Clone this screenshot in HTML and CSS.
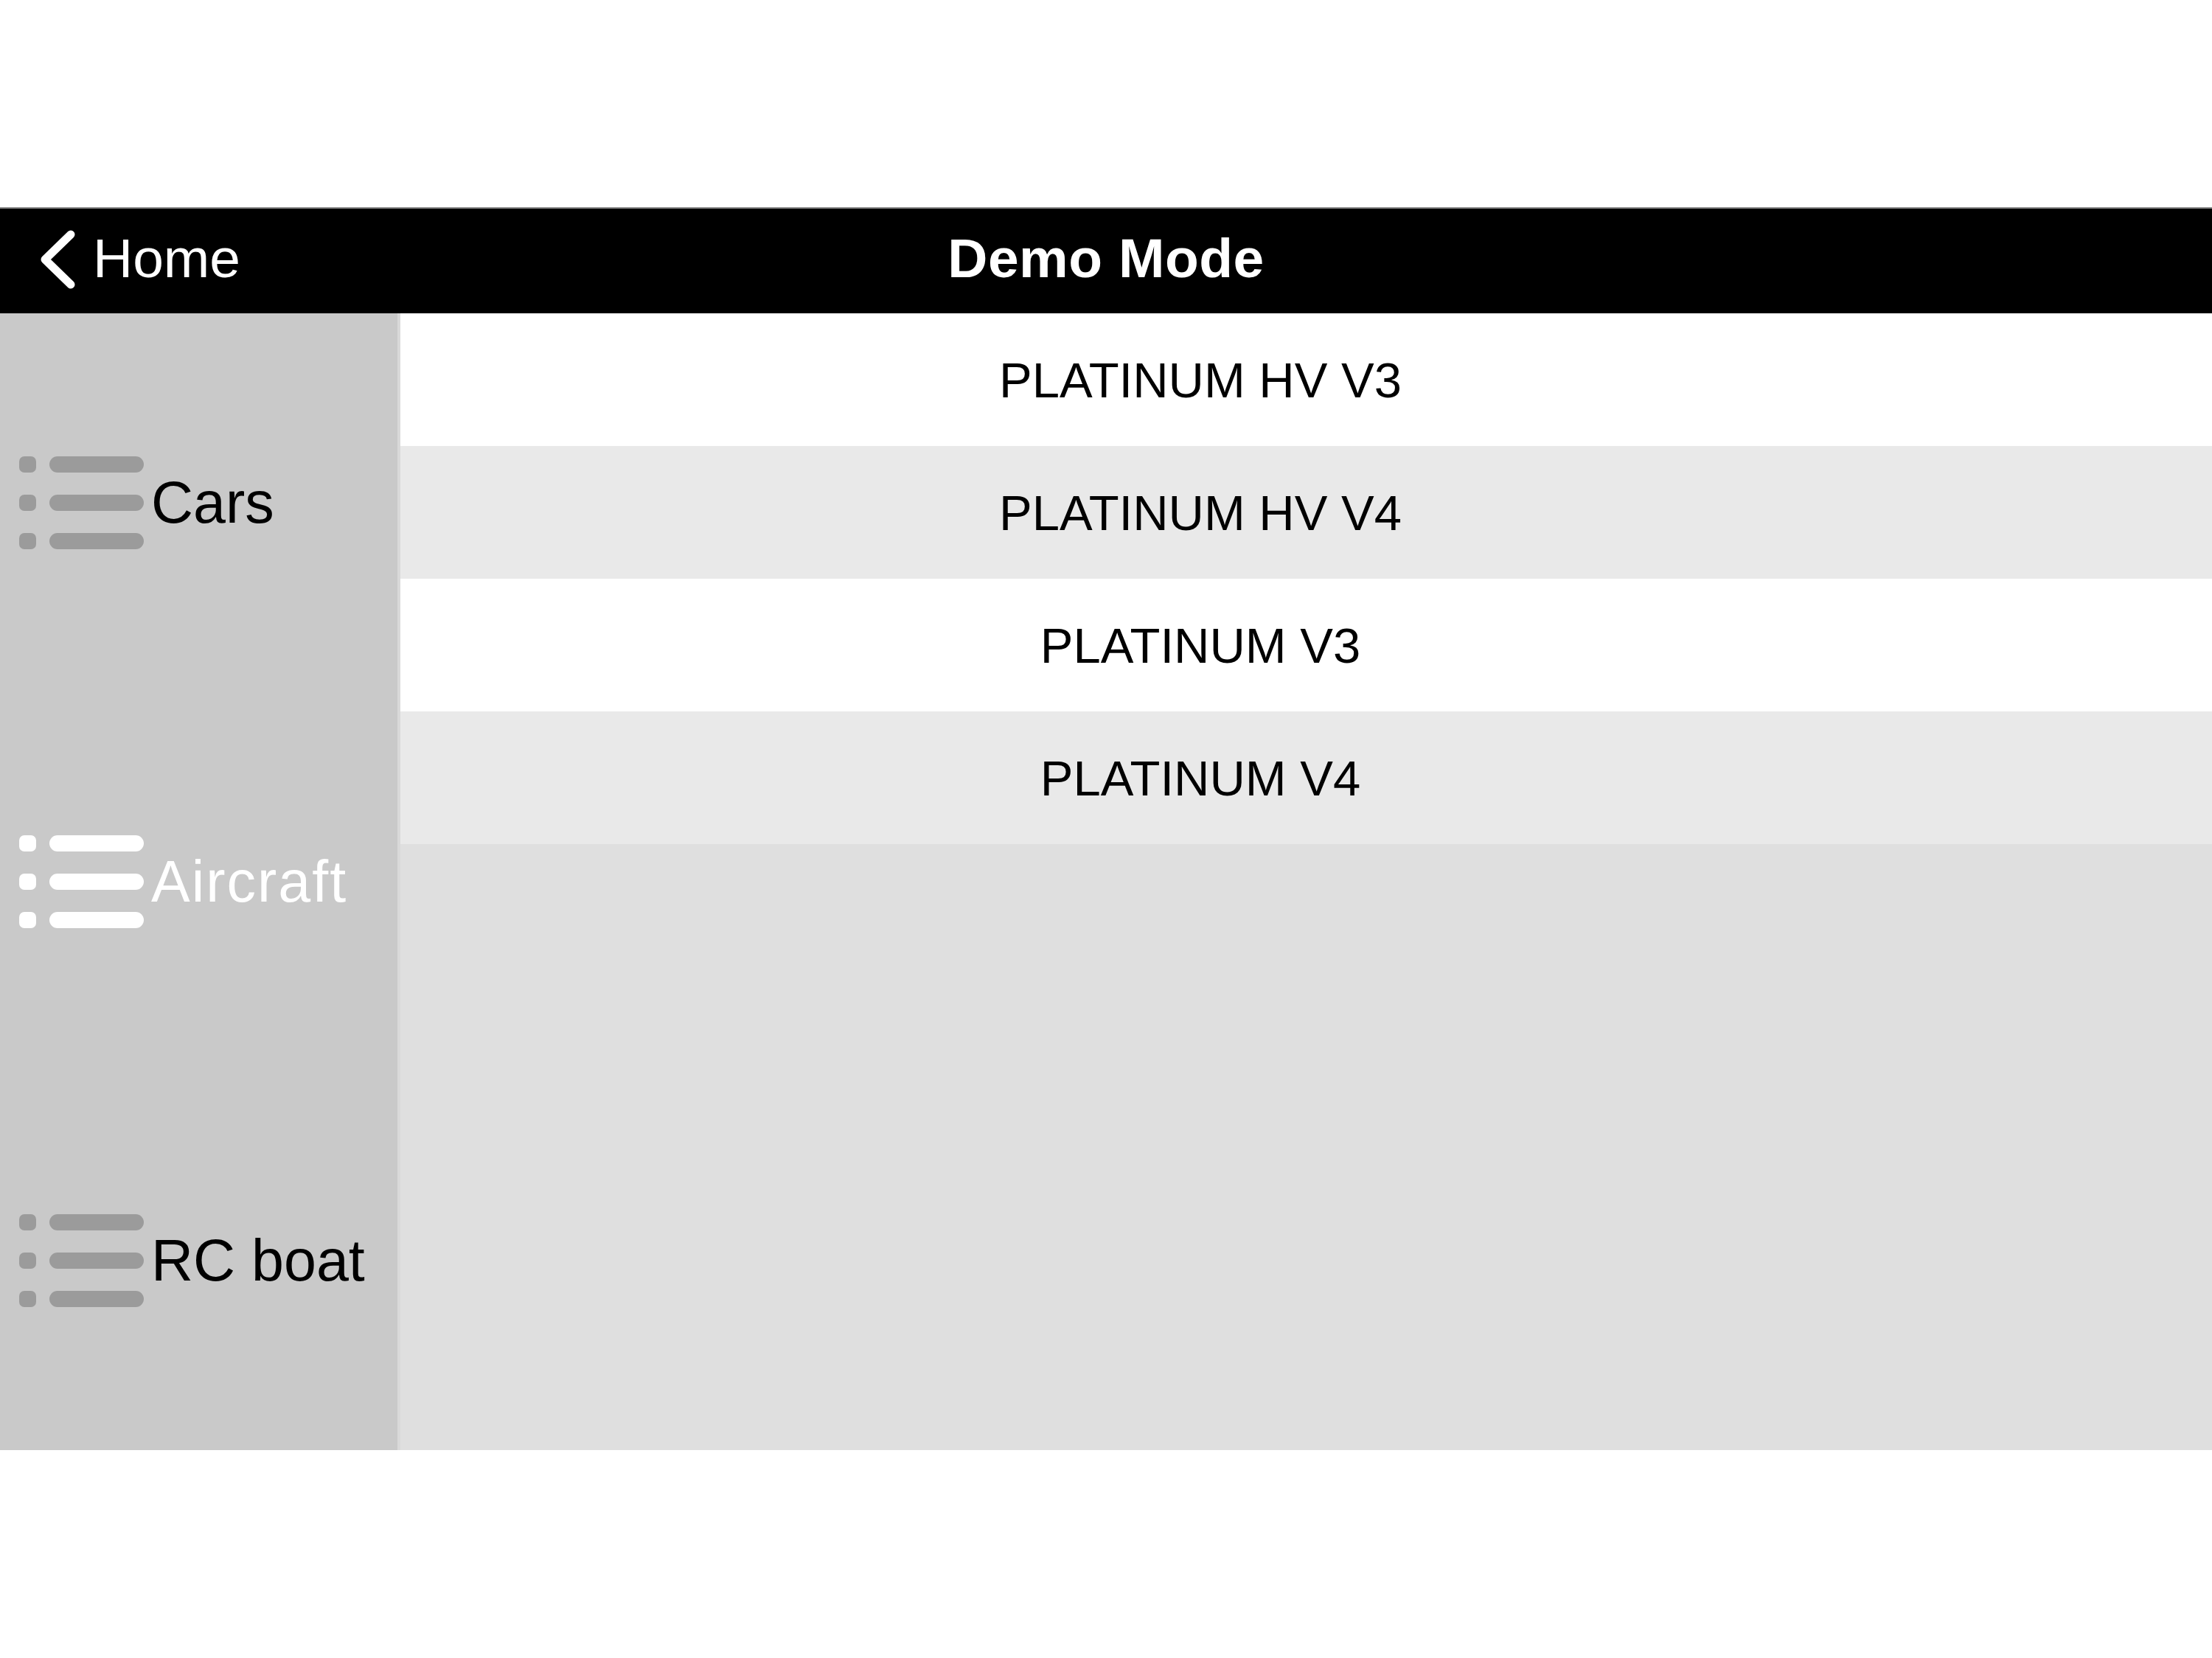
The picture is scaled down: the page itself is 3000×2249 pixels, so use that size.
FILE: index.html
```html
<!DOCTYPE html>
<html>
<head>
<meta charset="utf-8">
<link rel="stylesheet" href="styles.css">
</head>
<body>
<div class="top-space"></div>
<header class="navbar">
  <div class="back">
    <svg class="chevron" viewBox="0 0 52 84" width="52" height="84">
      <path d="M44 8 L9 42 L44 76" fill="none" stroke="#fff" stroke-width="11" stroke-linecap="round" stroke-linejoin="round"/>
    </svg>
    <span class="back-label">Home</span>
  </div>
  <div class="title">Demo Mode</div>
  <div class="spacer"></div>
</header>
<main class="main">
  <nav class="sidebar">
    <div class="cat">
      <svg class="list-icon grey" viewBox="0 0 170 126" width="170" height="126">
        <rect x="0" y="0" width="23" height="22" rx="7"/><rect x="41" y="0" width="128" height="22" rx="11"/>
        <rect x="0" y="52" width="23" height="22" rx="7"/><rect x="41" y="52" width="128" height="22" rx="11"/>
        <rect x="0" y="104" width="23" height="22" rx="7"/><rect x="41" y="104" width="128" height="22" rx="11"/>
      </svg>
      <span class="cat-label">Cars</span>
    </div>
    <div class="cat active">
      <svg class="list-icon white" viewBox="0 0 170 126" width="170" height="126">
        <rect x="0" y="0" width="23" height="22" rx="7"/><rect x="41" y="0" width="128" height="22" rx="11"/>
        <rect x="0" y="52" width="23" height="22" rx="7"/><rect x="41" y="52" width="128" height="22" rx="11"/>
        <rect x="0" y="104" width="23" height="22" rx="7"/><rect x="41" y="104" width="128" height="22" rx="11"/>
      </svg>
      <span class="cat-label">Aircraft</span>
    </div>
    <div class="cat">
      <svg class="list-icon grey" viewBox="0 0 170 126" width="170" height="126">
        <rect x="0" y="0" width="23" height="22" rx="7"/><rect x="41" y="0" width="128" height="22" rx="11"/>
        <rect x="0" y="52" width="23" height="22" rx="7"/><rect x="41" y="52" width="128" height="22" rx="11"/>
        <rect x="0" y="104" width="23" height="22" rx="7"/><rect x="41" y="104" width="128" height="22" rx="11"/>
      </svg>
      <span class="cat-label">RC boat</span>
    </div>
  </nav>
  <section class="content">
    <div class="row odd"><span>PLATINUM HV V3</span></div>
    <div class="row even"><span>PLATINUM HV V4</span></div>
    <div class="row odd"><span>PLATINUM V3</span></div>
    <div class="row even"><span>PLATINUM V4</span></div>
  </section>
</main>
</body>
</html>
```

FILE: styles.css
```css
html, body {
  margin: 0;
  padding: 0;
  background: #ffffff;
}
body {
  width: 3000px;
  height: 2249px;
  font-family: "Liberation Sans", Arial, sans-serif;
  overflow: hidden;
}
.top-space {
  height: 281px;
}
.navbar {
  height: 144px;
  background: #000000;
  color: #ffffff;
  display: grid;
  grid-template-columns: 1fr auto 1fr;
  align-items: center;
  box-sizing: border-box;
  border-top: 2px solid #8a8a8a;
}
.back {
  display: flex;
  align-items: center;
  padding-left: 52px;
}
.chevron {
  display: block;
  margin-top: -4px;
}
.back-label {
  font-size: 75px;
  margin-left: 22px;
  margin-top: -8px;
}
.title {
  font-size: 75px;
  font-weight: bold;
  letter-spacing: 0.5px;
  margin-top: -8px;
}
.main {
  display: flex;
  height: 1542px;
}
.sidebar {
  width: 539px;
  background: #c9c9c9;
  border-right: 4px solid #d9d9d9;
  display: flex;
  flex-direction: column;
}
.cat {
  flex: 1;
  display: flex;
  align-items: center;
  padding-left: 26px;
}
.list-icon {
  display: block;
  flex: none;
}
.list-icon.grey { fill: #9b9b9b; }
.list-icon.white { fill: #ffffff; }
.cat-label {
  font-size: 79px;
  color: #000000;
  margin-left: 9px;
}
.cat.active .cat-label {
  color: #ffffff;
  letter-spacing: 2px;
}
.content {
  flex: 1;
  background: #dfdfdf;
  display: flex;
  flex-direction: column;
}
.row {
  height: 180px;
  display: flex;
  align-items: center;
  justify-content: center;
  padding-right: 287px;
  font-size: 67px;
  color: #000000;
}
.row.odd { background: #ffffff; }
.row.even { background: #e9e9e9; }
```
